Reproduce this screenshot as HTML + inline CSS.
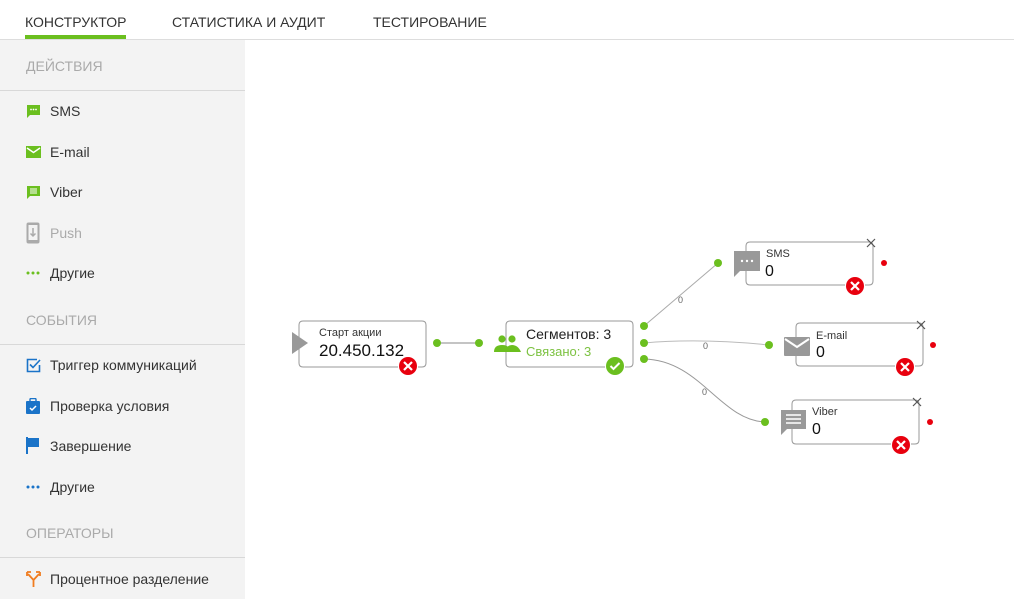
<!DOCTYPE html>
<html><head><meta charset="utf-8"><style>
*{margin:0;padding:0;box-sizing:border-box}
body{width:1014px;height:599px;position:relative;background:#fff;font-family:"Liberation Sans","DejaVu Sans",sans-serif;overflow:hidden;color:#333}
.t{position:absolute;white-space:nowrap}
.tab{top:14px;font-size:14px;color:#333}
.side{position:absolute;left:0;top:40px;width:245px;height:559px;background:#f3f3f3}
.hdr{position:absolute;left:26px;font-size:14px;color:#aaa}
.ln{position:absolute;left:0;width:245px;height:1px;background:#d8d8d8}
.it{position:absolute;left:50px;font-size:14px;color:#333}
.ic{position:absolute;left:26px}
</style></head><body>
<div class="t tab" style="left:25px">КОНСТРУКТОР</div>
<div class="t tab" style="left:172px">СТАТИСТИКА И АУДИТ</div>
<div class="t tab" style="left:373px">ТЕСТИРОВАНИЕ</div>
<div style="position:absolute;left:0;top:39px;width:1014px;height:1px;background:#ddd"></div>
<div style="position:absolute;left:25px;top:35px;width:101px;height:4px;background:#6bbf1f"></div>

<div class="side">
<div class="hdr" style="top:18px">ДЕЙСТВИЯ</div>
<div class="ln" style="top:50px"></div>
<svg class="ic" style="top:64px" width="15" height="15" viewBox="0 0 15 15"><path d="M1 1h13v10H4l-3 3z" fill="#6bbf1f"/><circle cx="5" cy="5.5" r=".9" fill="#fff"/><circle cx="7.5" cy="5.5" r=".9" fill="#fff"/><circle cx="10" cy="5.5" r=".9" fill="#fff"/></svg>
<div class="it" style="top:63px">SMS</div>
<svg class="ic" style="top:106px" width="15" height="12" viewBox="0 0 15 12"><rect x="0" y="0" width="15" height="12" fill="#6bbf1f"/><path d="M1 2l6.5 4.5L14 2" stroke="#fff" stroke-width="1.5" fill="none"/></svg>
<div class="it" style="top:104px">E-mail</div>
<svg class="ic" style="top:145px" width="15" height="15" viewBox="0 0 15 15"><path d="M1 1h13v10H4l-3 3z" fill="#6bbf1f"/><path d="M4 4h7M4 6h7M4 8h7" stroke="#fff" stroke-width="1"/></svg>
<div class="it" style="top:144px">Viber</div>
<svg class="ic" style="top:182px" width="15" height="22" viewBox="0 0 15 22"><rect x="0.5" y="0.5" width="13" height="21" rx="2" fill="#aaa"/><rect x="2.5" y="3" width="9" height="15" fill="#f3f3f3"/><path d="M7 6v8M4.5 11.5L7 14l2.5-2.5" stroke="#aaa" stroke-width="1.5" fill="none"/></svg>
<div class="it" style="top:185px;color:#aaa">Push</div>
<svg class="ic" style="top:231px" width="15" height="4"><circle cx="2" cy="2" r="1.5" fill="#6bbf1f"/><circle cx="7" cy="2" r="1.5" fill="#6bbf1f"/><circle cx="12" cy="2" r="1.5" fill="#6bbf1f"/></svg>
<div class="it" style="top:225px">Другие</div>

<div class="hdr" style="top:272px">СОБЫТИЯ</div>
<div class="ln" style="top:304px"></div>
<svg class="ic" style="top:318px" width="15" height="15" viewBox="0 0 15 15"><path d="M11 1.5H1.5v12h12V7" stroke="#1a73c8" stroke-width="1.6" fill="none"/><path d="M4 6.5l3 3L14 2" stroke="#1a73c8" stroke-width="1.6" fill="none"/></svg>
<div class="it" style="top:317px">Триггер коммуникаций</div>
<svg class="ic" style="top:358px" width="14" height="16" viewBox="0 0 14 16"><rect x="0" y="3" width="14" height="13" rx="1" fill="#1a73c8"/><rect x="4" y="0.5" width="6" height="4" rx="1" fill="none" stroke="#1a73c8" stroke-width="1.4"/><path d="M4 10l2 2 4-4" stroke="#fff" stroke-width="1.5" fill="none"/></svg>
<div class="it" style="top:358px">Проверка условия</div>
<svg class="ic" style="top:397px" width="14" height="17" viewBox="0 0 14 17"><rect x="0" y="0" width="2" height="17" fill="#1a73c8"/><path d="M2 1h11v9H2z" fill="#1a73c8"/></svg>
<div class="it" style="top:398px">Завершение</div>
<svg class="ic" style="top:445px" width="15" height="4"><circle cx="2" cy="2" r="1.5" fill="#1a73c8"/><circle cx="7" cy="2" r="1.5" fill="#1a73c8"/><circle cx="12" cy="2" r="1.5" fill="#1a73c8"/></svg>
<div class="it" style="top:439px">Другие</div>

<div class="hdr" style="top:485px">ОПЕРАТОРЫ</div>
<div class="ln" style="top:517px"></div>
<svg class="ic" style="top:531px" width="15" height="16" viewBox="0 0 15 16"><path d="M7.5 16V9L2 3M7.5 9L13 3M1 1h4M1 1v4M14 1h-4M14 1v4" stroke="#f07c1f" stroke-width="1.8" fill="none"/></svg>
<div class="it" style="top:531px">Процентное разделение</div>
</div>

<svg style="position:absolute;left:0;top:0" width="1014" height="599">
<g fill="none" stroke="#999" stroke-width="1">
<path d="M299 325v38q0 4 4 4h95M418 367h4q4 0 4-4v-38q0-4-4-4H303q-4 0-4 4"/>
<path d="M506 325v38q0 4 4 4h95M625 367h4q4 0 4-4v-38q0-4-4-4H510q-4 0-4 4"/>
<path d="M746 246v35q0 4 4 4h95M865 285h4q4 0 4-4V246q0-4-4-4H750q-4 0-4 4"/>
<path d="M796 327v35q0 4 4 4h95M915 366h4q4 0 4-4V327q0-4-4-4H800q-4 0-4 4"/>
<path d="M792 404v36q0 4 4 4h95M911 444h4q4 0 4-4V404q0-4-4-4H796q-4 0-4 4"/>
<path d="M437 343H479" stroke="#888"/>
<path d="M644 326L718 263" stroke="#aaa"/>
<path d="M644 343Q700 338 769 345" stroke="#bbb"/>
<path d="M644 359C700 360 720 420 765 422" stroke="#999"/>
</g>
<g stroke="#555" stroke-width="1.2"><path d="M867 239l8 8M875 239l-8 8M917 321l8 8M925 321l-8 8M913 398l8 8M921 398l-8 8"/></g>
<path d="M292 332L308 343L292 354z" fill="#999"/>
<g fill="#6bbf1f"><circle cx="437" cy="343" r="4"/><circle cx="479" cy="343" r="4"/><circle cx="644" cy="326" r="4"/><circle cx="644" cy="343" r="4"/><circle cx="644" cy="359" r="4"/><circle cx="718" cy="263" r="4"/><circle cx="769" cy="345" r="4"/><circle cx="765" cy="422" r="4"/></g>
<g fill="#e8000e"><circle cx="884" cy="263" r="3"/><circle cx="933" cy="345" r="3"/><circle cx="930" cy="422" r="3"/></g>
<g fill="#e8000e"><circle cx="408" cy="366" r="9"/><circle cx="855" cy="286" r="9"/><circle cx="905" cy="367" r="9"/><circle cx="901" cy="445" r="9"/></g>
<g stroke="#fff" stroke-width="2.2"><path d="M404 362l8 8M412 362l-8 8M851 282l8 8M859 282l-8 8M901 363l8 8M909 363l-8 8M897 441l8 8M905 441l-8 8"/></g>
<circle cx="615" cy="366" r="9" fill="#6bbf1f"/><path d="M610.5 366l3 3 6-6" stroke="#fff" stroke-width="2" fill="none"/>
<g fill="#6bbf1f"><circle cx="502" cy="339" r="3.6"/><circle cx="512" cy="339" r="3.6"/><path d="M494 352q0-7 8-7t8 7z"/><path d="M506 352q0-7 6-7t9 7z"/></g>
<path d="M734 251h26v20h-20l-6 6z" fill="#999"/><g fill="#fff"><circle cx="742" cy="261" r="1.2"/><circle cx="747" cy="261" r="1.2"/><circle cx="752" cy="261" r="1.2"/></g>
<rect x="784" y="337" width="26" height="19" rx="1" fill="#999"/><path d="M785 339l12 8 12-8" stroke="#fff" stroke-width="2" fill="none"/>
<path d="M781 410h25v19h-19l-6 6z" fill="#999"/><path d="M786 415h15M786 419h15M786 423h15" stroke="#fff" stroke-width="1.6"/>
<g font-family="Liberation Sans,sans-serif" fill="#333">
<text x="319" y="336" font-size="11">Старт акции</text>
<text x="319" y="356" font-size="17" fill="#111">20.450.132</text>
<text x="526" y="339" font-size="14" fill="#222">Сегментов: 3</text>
<text x="526" y="356" font-size="13" fill="#7dc242">Связано: 3</text>
<text x="766" y="257" font-size="11">SMS</text>
<text x="765" y="276" font-size="16" fill="#111">0</text>
<text x="816" y="339" font-size="11">E-mail</text>
<text x="816" y="357" font-size="16" fill="#111">0</text>
<text x="812" y="415" font-size="11">Viber</text>
<text x="812" y="434" font-size="16" fill="#111">0</text>
<g font-size="9" fill="#666"><text x="678" y="303">0</text><text x="703" y="349">0</text><text x="702" y="395">0</text></g>
</g>
</svg>
</body></html>
